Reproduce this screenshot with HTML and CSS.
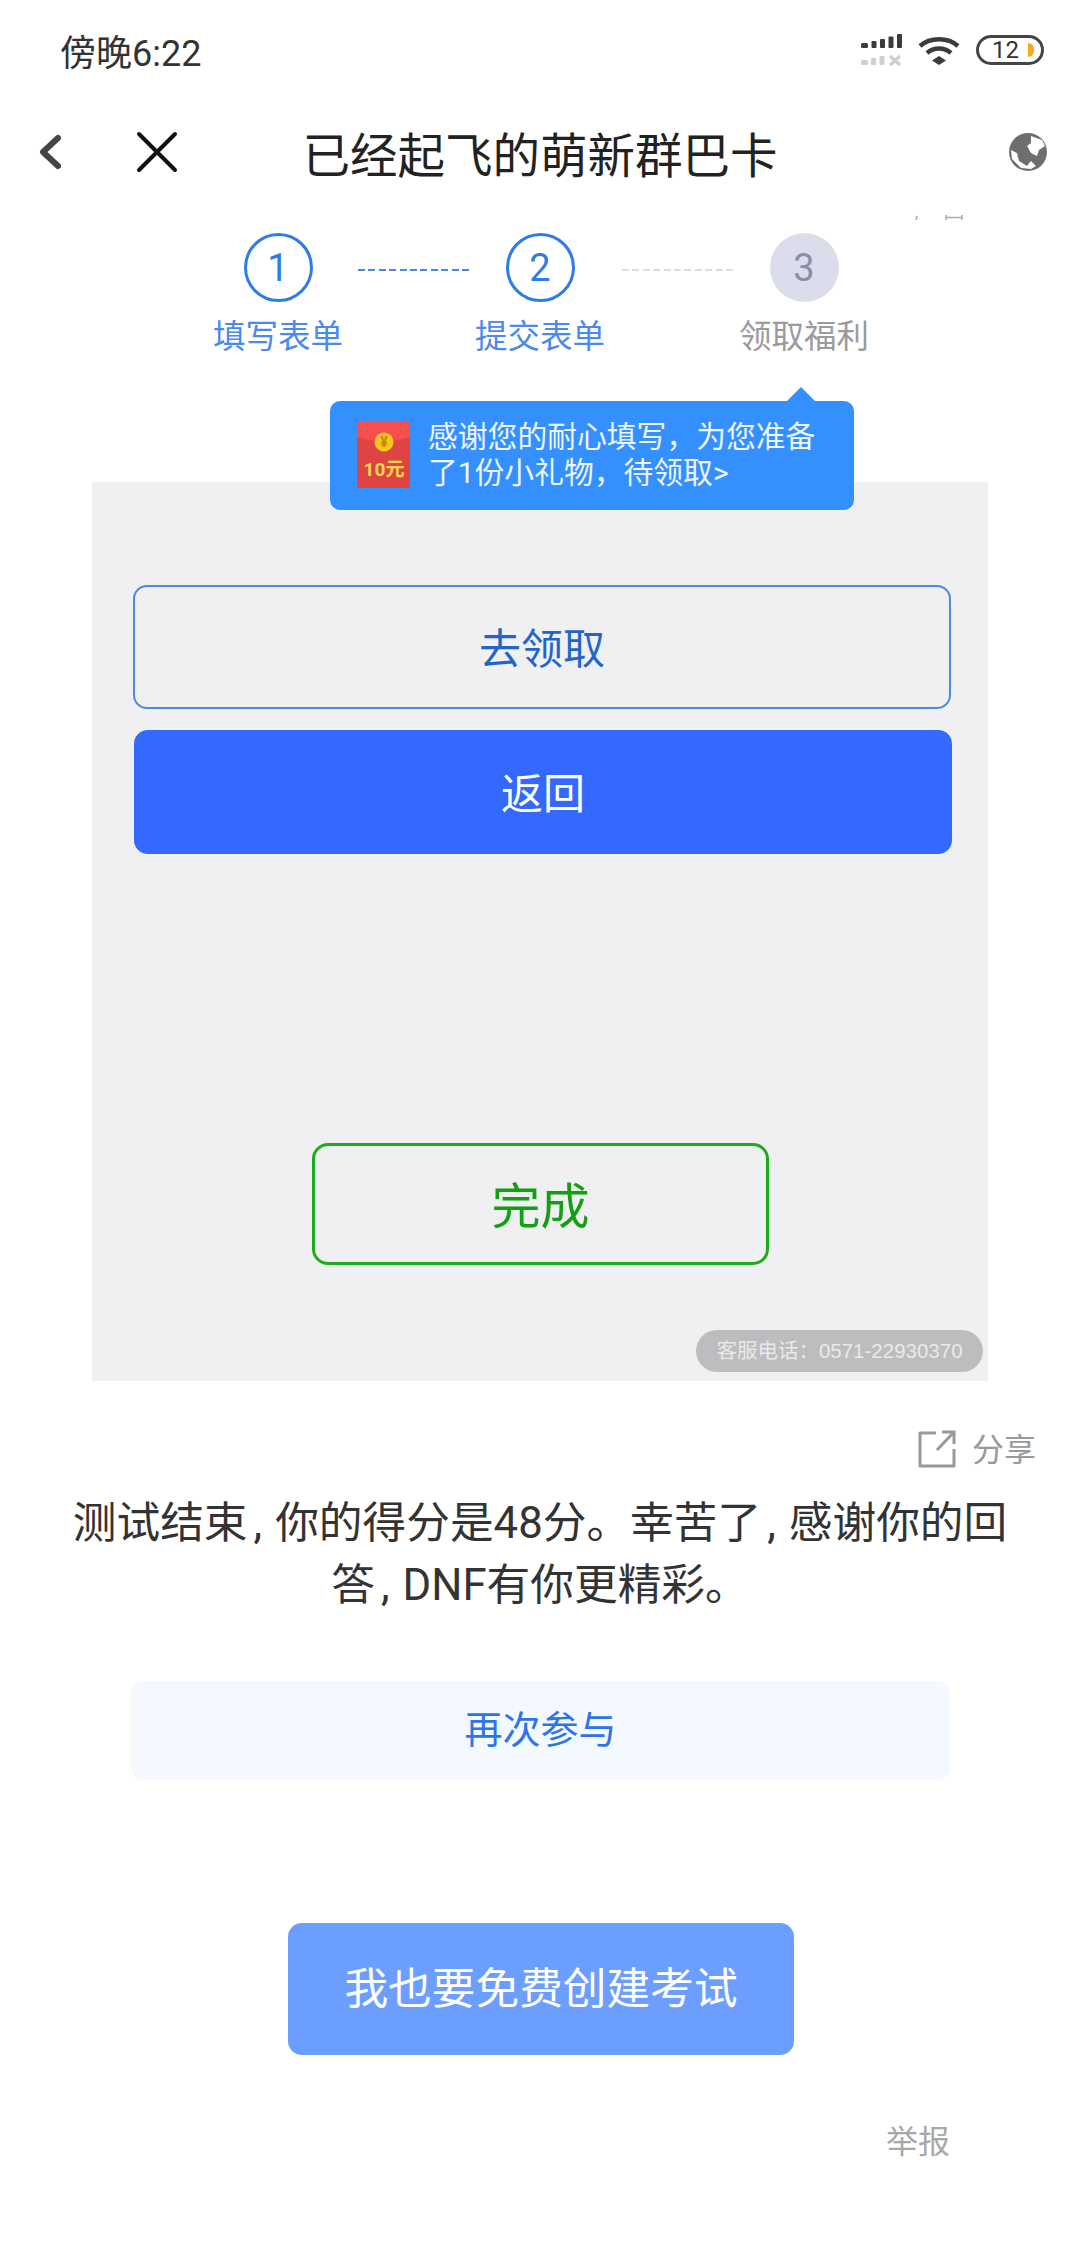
FILE: index.html
```html
<!DOCTYPE html>
<html lang="zh-CN">

<head>
    <meta charset="UTF-8">
    <meta name="viewport" content="width=device-width, initial-scale=1.0">
    <title>已经起飞的萌新群巴卡</title>
    <link rel="stylesheet" href="styles.css">
</head>

<body>
    <div class="status-bar">
        <span class="status-time">傍晚6:22</span>
        <div class="status-icons">
            <svg class="icon-signal" width="41" height="32" viewBox="0 0 41 32">
                <g fill="#3c3c3c">
                    <rect x="0" y="9" width="7" height="5" rx="1.5" />
                    <rect x="10.5" y="7" width="5" height="7" rx="1" />
                    <rect x="19" y="5" width="5" height="9" rx="1" />
                    <rect x="27.5" y="2.500" width="5" height="11.500" rx="1" />
                    <rect x="36" y="0" width="5" height="14" rx="1" />
                </g>
                <g fill="#cfcfcf">
                    <rect x="0" y="26" width="7" height="5" rx="1.500" />
                    <rect x="10" y="24" width="5" height="7" rx="1" />
                    <rect x="18.500" y="22" width="5" height="9" rx="1" />
                </g>
                <path d="M29 22l10 9M39 22l-10 9" stroke="#cfcfcf" stroke-width="3.500" fill="none" />
            </svg>
            <svg class="icon-wifi" width="42" height="29" viewBox="0 0 42 29">
                <g fill="none" stroke="#3c3c3c" stroke-width="4.500">
                    <path d="M2 10C12 1 30 1 40 10" />
                    <path d="M9 17C16 11 26 11 33 17" />
                </g>
                <path d="M21 20l7 4.500-7 4.500-7-4.500z" fill="#3c3c3c" />
            </svg>
            <div class="battery">
                <span class="battery-num">12</span>
                <span class="battery-level"></span>
            </div>
        </div>
    </div>

    <div class="nav-bar">
        <svg class="nav-back" width="24" height="36" viewBox="0 0 24 36">
            <path d="M20 4L5 18l15 14" fill="none" stroke="#444" stroke-width="6" stroke-linecap="round" stroke-linejoin="round" />
        </svg>
        <svg class="nav-close" width="44" height="44" viewBox="0 0 44 44">
            <path d="M4 4l36 36M40 4L4 40" fill="none" stroke="#111" stroke-width="4" stroke-linecap="round" />
        </svg>
        <h1 class="nav-title">已经起飞的萌新群巴卡</h1>
        <svg class="nav-globe" width="38" height="38" viewBox="0 0 38 38">
            <defs>
                <clipPath id="globe-clip">
                    <circle cx="19" cy="19" r="19" />
                </clipPath>
            </defs>
            <circle cx="19" cy="19" r="19" fill="#6e6e6e" />
            <g clip-path="url(#globe-clip)" fill="#fff">
                <path d="M22 3l11 4 3 6-6 4-2 6-6-3-4-7 4-3z" />
                <path d="M2 17l6 3 2 8 8 5 4-5 5 5-5 3-10-1-9-9z" />
            </g>
        </svg>
    </div>

    <div class="result-shot">
        <svg class="shot-scrap" width="48" height="5" viewBox="0 0 48 5">
            <path d="M1 5l1-4M31 0v5M47 0v5M31 2.500h16" stroke="#aaa" stroke-width="1.500" fill="none" />
        </svg>

        <div class="steps">
            <div class="step done">
                <div class="step-num">1</div>
                <div class="step-label">填写表单</div>
            </div>
            <div class="step-line done"></div>
            <div class="step done">
                <div class="step-num">2</div>
                <div class="step-label">提交表单</div>
            </div>
            <div class="step-line todo"></div>
            <div class="step todo">
                <div class="step-num">3</div>
                <div class="step-label">领取福利</div>
            </div>
        </div>

        <div class="panel">
            <div class="gift-tip">
                <svg class="gift-packet" width="53" height="66" viewBox="0 0 53 66">
                    <rect width="53" height="66" rx="3" fill="#dd4442" />
                    <path d="M0 3a3 3 0 0 1 3-3h47a3 3 0 0 1 3 3v12q-26 8-53 0z" fill="#f5504f" />
                    <circle cx="27" cy="20" r="9.500" fill="#f6c71b" />
                    <text class="packet-coin" x="27" y="25" text-anchor="middle">¥</text>
                    <text class="packet-value" x="27" y="54" text-anchor="middle">10元</text>
                </svg>
                <p class="gift-text">感谢您的耐心填写&#xFF0C;为您准备<br>了1份小礼物&#xFF0C;待领取&gt;</p>
            </div>
            <a class="btn-claim">去领取</a>
            <a class="btn-back">返回</a>
            <a class="btn-done">完成</a>
            <div class="service-pill">客服电话&#xFF1A;0571-22930370</div>
        </div>
    </div>

    <div class="share-row">
        <svg width="38" height="38" viewBox="0 0 38 38">
            <g fill="none" stroke="#999" stroke-width="3">
                <path d="M18 3H2v33h34V19" stroke-linejoin="round" />
                <path d="M19 20L35 3M24 2h12v12" />
            </g>
        </svg>
        <span class="share-label">分享</span>
    </div>

    <p class="result-text">测试结束<span class="comma">,</span>你的得分是48分。幸苦了<span class="comma">,</span>感谢你的回答<span class="comma">,</span>DNF有你更精彩。</p>

    <a class="btn-retry">再次参与</a>
    <a class="btn-create">我也要免费创建考试</a>
    <div class="report-row">举报</div>
</body>

</html>
```

FILE: styles.css
```css
* {
    box-sizing: border-box;
}

body {
    margin: 0;
    width: 1080px;
    height: 2248px;
    overflow: hidden;
    background-color: #fff;
    color: #333;
    font-family: Roboto, "Noto Sans CJK SC", sans-serif;
}

p,
h1 {
    margin: 0;
    font-weight: normal;
}

/* status bar */
.status-bar {
    height: 100px;
    padding: 0 36px 0 60px;
    display: flex;
    align-items: center;
    justify-content: space-between;
}

.status-time {
    font-size: 36px;
    color: #333;
}

.status-icons {
    display: flex;
    align-items: center;
    gap: 16px;
}

.battery {
    width: 68px;
    height: 30px;
    padding: 0 7px 0 0;
    border: 3.5px solid #444;
    border-radius: 15px;
    display: flex;
    align-items: center;
    justify-content: flex-end;
    gap: 9px;
}

.battery-num {
    font-size: 24px;
    line-height: 24px;
    color: #333;
}

.battery-level {
    width: 6px;
    height: 14px;
    background-color: #f5a623;
    border-radius: 0 7px 7px 0;
}

/* nav bar */
.nav-bar {
    position: relative;
    height: 104px;
    display: flex;
    align-items: center;
}

.nav-back {
    margin-left: 38px;
}

.nav-close {
    margin-left: 73px;
}

.nav-title {
    position: absolute;
    left: 0;
    right: 0;
    text-align: center;
    font-size: 47.500px;
    color: #222;
}

.nav-globe {
    margin-left: auto;
    margin-right: 33px;
}

/* picture area with the steps and the panel */
.result-shot {
    position: relative;
    padding-top: 29px;
}

.shot-scrap {
    position: absolute;
    top: 11px;
    left: 915px;
}

.steps {
    display: flex;
    padding-left: 213px;
}

.step {
    width: 130px;
    display: flex;
    flex-direction: column;
    align-items: center;
}

.step-num {
    width: 69px;
    height: 69px;
    border-radius: 50%;
    display: flex;
    align-items: center;
    justify-content: center;
    font-size: 38px;
}

.step.done .step-num {
    border: 3px solid #2f7be8;
    color: #2f7be8;
}

.step.todo .step-num {
    background-color: #dbdded;
    color: #8b8ea8;
}

.step-label {
    margin-top: 15px;
    font-size: 32.500px;
    line-height: 40px;
    white-space: nowrap;
}

.step.done .step-label {
    color: #4a89ee;
}

.step.todo .step-label {
    color: #9a9a9f;
}

.step-line {
    width: 114px;
    height: 2px;
    margin-top: 36px;
}

.step-line.done {
    margin-left: 15px;
    margin-right: 3px;
    background: repeating-linear-gradient(90deg, #4a86e4 0 7px, transparent 7px 10.400px);
}

.step-line.todo {
    margin-left: 17px;
    margin-right: 3px;
    background: repeating-linear-gradient(90deg, #dcdce2 0 7px, transparent 7px 10.400px);
}

.panel {
    position: relative;
    width: 896px;
    height: 899px;
    margin: 125px 0 0 92px;
    padding-top: 103px;
    background-color: #f0f0f2;
}

.gift-tip {
    position: absolute;
    top: -81px;
    left: 238px;
    width: 524px;
    height: 109px;
    padding: 21px 0 0 27px;
    display: flex;
    gap: 18px;
    background-color: #3490ff;
    border-radius: 10px;
}

.gift-tip::before {
    content: "";
    position: absolute;
    top: -14px;
    left: 457px;
    border-left: 14px solid transparent;
    border-right: 14px solid transparent;
    border-bottom: 14px solid #3490ff;
}

.gift-text {
    margin-top: -3px;
    font-size: 29.800px;
    line-height: 36px;
    color: #eef5ff;
    white-space: nowrap;
}

.packet-coin {
    font-size: 14px;
    font-weight: bold;
    fill: #c9820c;
}

.packet-value {
    font-size: 19px;
    font-weight: bold;
    fill: #ffd84f;
}

.panel a {
    padding-bottom: 3px;
    display: flex;
    align-items: center;
    justify-content: center;
}

.btn-claim {
    width: 818px;
    height: 124px;
    margin-left: 41px;
    border: 2px solid #4a8ddf;
    border-radius: 14px;
    font-size: 42px;
    color: #1f66c8;
}

.btn-back {
    width: 818px;
    height: 124px;
    margin: 21px 0 0 42px;
    background-color: #3369ff;
    border-radius: 14px;
    font-size: 42px;
    color: #fff;
}

.btn-done {
    width: 457px;
    height: 122px;
    margin: 289px 0 0 220px;
    border: 3px solid #1aad19;
    border-radius: 16px;
    font-size: 49px;
    color: #12a012;
}

.service-pill {
    position: absolute;
    right: 5px;
    bottom: 9px;
    width: 287px;
    height: 42px;
    border-radius: 21px;
    background-color: #bdbdbf;
    color: #e9e9e9;
    font-family: "Liberation Sans", "Noto Sans CJK SC", sans-serif;
    font-size: 20.500px;
    line-height: 42px;
    text-align: center;
    white-space: nowrap;
}

/* below the picture */
.share-row {
    height: 38px;
    margin-top: 49px;
    padding-right: 44px;
    display: flex;
    align-items: center;
    justify-content: flex-end;
    gap: 16px;
    font-size: 32px;
    color: #999;
}

.share-label {
    padding-bottom: 4px;
}

.result-text {
    margin-top: 24px;
    padding: 0 70px;
    font-size: 43.700px;
    line-height: 62px;
    text-align: center;
    color: #333;
}

.comma {
    padding: 0 13px 0 6px;
}

.btn-retry {
    display: block;
    width: 819px;
    height: 99px;
    margin: 65px 0 0 131px;
    background-color: #f4f8ff;
    border-radius: 12px;
    font-size: 38px;
    line-height: 99px;
    text-align: center;
    color: #2d74e8;
}

.btn-create {
    display: block;
    width: 506px;
    height: 132px;
    margin: 143px 0 0 288px;
    background-color: #6c9eff;
    border-radius: 14px;
    font-size: 43.700px;
    line-height: 132px;
    text-align: center;
    color: #fff;
}

.report-row {
    margin-top: 67px;
    padding-right: 130px;
    font-size: 32px;
    line-height: 40px;
    text-align: right;
    color: #a8a8a8;
}
```
